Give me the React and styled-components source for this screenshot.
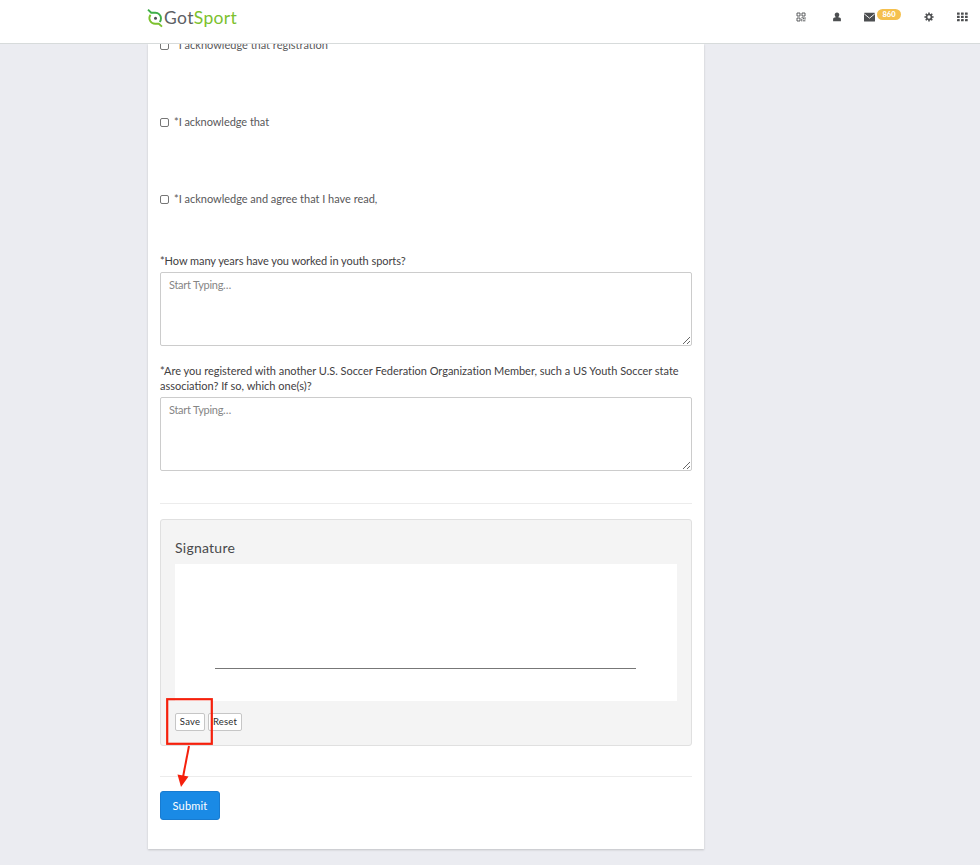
import React from "react";
import styled, { createGlobalStyle } from "styled-components";

const Global = createGlobalStyle`
  * { box-sizing: border-box; }
  html, body { margin: 0; background: #ebecf1; overflow: hidden; }
  body { font-family: Lato, "Open Sans", sans-serif; font-size: 11px; color: #4b4b4d; }
`;

const Page = styled.div`
  display: flex;
  flex-direction: column;
  height: 865px;
  overflow: hidden;
`;

const Header = styled.header`
  flex: none;
  display: flex;
  justify-content: space-between;
  height: 44px;
  padding: 0 12px 0 147px;
  background: #fff;
  border-bottom: 1px solid #d7dbdb;
  position: relative;
  z-index: 1;
`;

const Brand = styled.a`
  display: flex;
  align-items: flex-start;
  padding-top: 8px;
  svg { display: block; }
`;

const BrandName = styled.span`
  margin-left: 0;
  font-size: 17.5px;
  line-height: 20px;
  letter-spacing: 0.35px;
  color: #5d6064;
  em { font-style: normal; color: #7cc12e; }
`;

const Tools = styled.nav`
  display: flex;
  align-items: flex-start;
  padding-top: 12px;
  svg { display: block; }
`;

const Tool = styled.span`
  display: flex;
  margin-left: ${(p) => p.$gap || 0}px;
  color: #4d4f51;
`;

const Badge = styled.span`
  width: 24px;
  height: 11px;
  margin: -3px 0 0 2px;
  border-radius: 6px;
  background: #f5c04d;
  color: #fff;
  font-size: 7.5px;
  font-weight: 900;
  line-height: 11px;
  text-align: center;
`;

const Main = styled.main`
  flex: 1;
  min-height: 0;
  overflow: hidden;
`;

const Panel = styled.form`
  display: flow-root;
  width: 556px;
  height: 805px;
  margin-left: 148px;
  padding: 0 12px;
  background: #fff;
  box-shadow: 0 1px 2px rgba(0, 0, 0, 0.18);
`;

const Checks = styled.div`
  margin-top: -7px;
`;

const CheckRow = styled.label`
  display: flex;
  align-items: flex-start;
  height: 77px;
  line-height: 16px;
  letter-spacing: ${(p) => p.$ls || 0}px;
  color: #58585a;
`;

const Checkbox = styled.input`
  appearance: none;
  flex: none;
  width: 9px;
  height: 9px;
  margin: 4px 5px 0 0;
  border: 1px solid #767676;
  border-radius: 2px;
  background: #fff;
`;

const Question = styled.label`
  display: block;
  margin-top: ${(p) => p.$top}px;
  line-height: 15px;
  color: #3f4042;
  white-space: nowrap;
`;

const Line = styled.span`
  letter-spacing: ${(p) => p.$ls || 0}px;
`;

const Answer = styled.textarea`
  display: block;
  width: 532px;
  height: 74px;
  margin-top: 4px;
  padding: 4px 8px;
  border: 1px solid #ccc;
  border-radius: 2px;
  background: #fff;
  font: 11px/15px Lato, sans-serif;
  letter-spacing: -0.28px;
  resize: both;
  &::placeholder { color: #858585; opacity: 1; }
`;

const Rule = styled.hr`
  height: 1px;
  margin: ${(p) => p.$top}px 0 15px;
  border: 0;
  background: #ececec;
`;

const Well = styled.section`
  position: relative;
  height: 227px;
  padding: 19px 14px 0;
  border: 1px solid #e0e0e0;
  border-radius: 3px;
  background: #f4f4f4;
`;

const WellTitle = styled.h2`
  margin: 0 0 8px;
  font-size: 14px;
  font-weight: 400;
  line-height: 17px;
  letter-spacing: 0.25px;
  color: #48494b;
`;

const Pad = styled.div`
  height: 137px;
  padding: 104px 41px 0 40px;
  background: #fff;
`;

const SignLine = styled.div`
  height: 1px;
  background: #777;
`;

const Buttons = styled.div`
  display: flex;
  gap: 3px;
  margin-top: 12px;
`;

const SmallButton = styled.button`
  width: ${(p) => p.$w}px;
  height: 18px;
  padding: 0;
  border: 1px solid #c6c6c6;
  border-radius: 2px;
  background: #fff;
  color: #2c2c2c;
  font: 9.5px/14px Lato, sans-serif;
  letter-spacing: 0.2px;
`;

const Submit = styled.button`
  display: block;
  width: 60px;
  height: 29px;
  margin-top: -1px;
  padding: 0 0 1px;
  border: 1px solid #187bd0;
  border-radius: 3px;
  background: #1a8ae5;
  color: #fff;
  font: 11px/25px Lato, sans-serif;
  letter-spacing: 0.2px;
`;

const Callout = styled.svg`
  position: absolute;
  left: 2px;
  top: 175px;
  overflow: visible;
  pointer-events: none;
`;

const Logo = () => (
  <svg width="17" height="20" viewBox="0 0 17 20" fill="none" strokeWidth="1.9">
    <path d="M1 1.600L4.200 4.700H8.400A5.600 5.600 0 0 1 14 10.200C14 11.800 13.500 13 12.700 14" stroke="#3fae49" />
    <path d="M3.500 6.800A5.700 5.700 0 0 0 8.400 15.800H11.800L15 18.600" stroke="#7cc12e" />
    <circle cx="8.500" cy="10.200" r="1.500" fill="#4d5054" />
  </svg>
);

const QrIcon = () => (
  <svg width="10" height="10" viewBox="0 0 10 10" fill="none" stroke="currentColor">
    <path d="M1 1h3v3H1zM6 1h3v3H6zM1 6h3v3H1z" strokeWidth=".9" />
    <path d="M5.400 5.800h2.200v1.500M9 5.200v2.400M7 8.800h2.400M5.800 7v2.400" strokeWidth=".9" />
  </svg>
);

const UserIcon = () => (
  <svg width="8" height="10" viewBox="0 0 8 10" fill="currentColor">
    <path d="M4 .4c1.500 0 2.300 1 2.300 2.300 0 1-.4 1.700-1 2.200v.3l1.800.6c.5.2.8.6.8 1.100v2.300H.1V6.900c0-.5.3-.9.8-1.100l1.800-.6v-.3c-.6-.5-1-1.200-1-2.200C1.700 1.400 2.500.4 4 .4z" />
  </svg>
);

const MailIcon = () => (
  <svg width="11" height="10" viewBox="0 0 11 10">
    <rect y=".8" width="11" height="8.700" rx=".6" fill="currentColor" />
    <path d="M.2 1.800L5.500 6.200l5.300-4.400" fill="none" stroke="#fff" strokeWidth=".9" />
  </svg>
);

const CogIcon = () => (
  <svg width="10" height="10" viewBox="0 0 10 10" fill="none" stroke="currentColor">
    <circle cx="5" cy="5" r="2.500" strokeWidth="1.700" />
    <path d="M5 .4v1.600M5 8v1.600M.4 5H2M8 5h1.600M1.750 1.750l1.100 1.100M7.150 7.150l1.100 1.100M1.750 8.250l1.100-1.100M7.150 2.850l1.100-1.100" strokeWidth="1.600" />
  </svg>
);

const GridIcon = () => (
  <svg width="11" height="10" viewBox="0 0 11 10" fill="currentColor">
    {[0.5, 3.8, 7.1].map((y) =>
      [0, 4, 8].map((x) => <rect key={`${x}-${y}`} x={x} y={y} width="2.700" height="2.200" rx=".3" />)
    )}
  </svg>
);

export default function App() {
  return (
    <Page>
      <Global />
      <Header>
        <Brand>
          <Logo />
          <BrandName>Got<em>Sport</em></BrandName>
        </Brand>
        <Tools>
          <Tool><QrIcon /></Tool>
          <Tool $gap={27}><UserIcon /></Tool>
          <Tool $gap={23}><MailIcon /><Badge>860</Badge></Tool>
          <Tool $gap={23}><CogIcon /></Tool>
          <Tool $gap={23}><GridIcon /></Tool>
        </Tools>
      </Header>
      <Main>
        <Panel>
          <Checks>
            <CheckRow><Checkbox type="checkbox" />*I acknowledge that registration*</CheckRow>
            <CheckRow $ls={-0.05}><Checkbox type="checkbox" />*I acknowledge that</CheckRow>
            <CheckRow $ls={-0.02}><Checkbox type="checkbox" />*I acknowledge and agree that I have read,</CheckRow>
          </Checks>
          <Question $top={-15}><Line $ls={-0.06}>*How many years have you worked in youth sports?</Line></Question>
          <Answer placeholder="Start Typing…" />
          <Question $top={17}>
            <Line $ls={-0.02}>*Are you registered with another U.S. Soccer Federation Organization Member, such a US Youth Soccer state</Line>
            <br />
            <Line>association? If so, which one(s)?</Line>
          </Question>
          <Answer placeholder="Start Typing…" />
          <Rule $top={32} />
          <Well>
            <WellTitle>Signature</WellTitle>
            <Pad><SignLine /></Pad>
            <Buttons>
              <SmallButton type="button" $w={30}>Save</SmallButton>
              <SmallButton type="button" $w={34}>Reset</SmallButton>
            </Buttons>
            <Callout width="60" height="92" viewBox="0 0 60 92">
              <rect x="4.200" y="4.200" width="44.600" height="44.600" fill="none" stroke="#f5200c" strokeWidth="2.200" />
              <path d="M26 51L20 82" stroke="#f5200c" strokeWidth="2" />
              <path d="M14.500 79.500L25.500 81.500L18 92z" fill="#f5200c" />
            </Callout>
          </Well>
          <Rule $top={30} />
          <Submit type="button">Submit</Submit>
        </Panel>
      </Main>
    </Page>
  );
}
